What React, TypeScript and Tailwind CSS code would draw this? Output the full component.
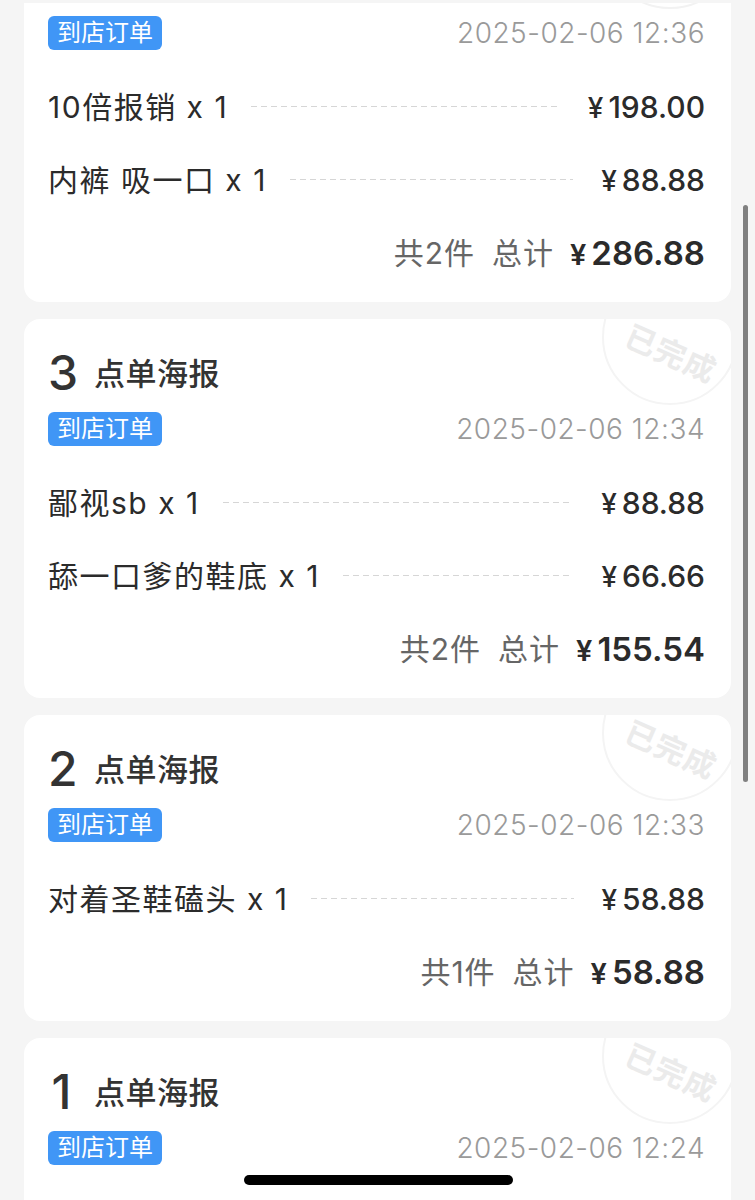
import React from "react";

type Item = { name: string; price: string };
type Order = {
  no?: string;
  date: string;
  items: Item[];
  count: number;
  total: string;
};

const orders: Order[] = [
  {
    no: "4",
    date: "2025-02-06 12:36",
    items: [
      { name: "10倍报销 x 1", price: "198.00" },
      { name: "内裤 吸一口 x 1", price: "88.88" },
    ],
    count: 2,
    total: "286.88",
  },
  {
    no: "3",
    date: "2025-02-06 12:34",
    items: [
      { name: "鄙视sb x 1", price: "88.88" },
      { name: "舔一口爹的鞋底 x 1", price: "66.66" },
    ],
    count: 2,
    total: "155.54",
  },
  {
    no: "2",
    date: "2025-02-06 12:33",
    items: [{ name: "对着圣鞋磕头 x 1", price: "58.88" }],
    count: 1,
    total: "58.88",
  },
  {
    no: "1",
    date: "2025-02-06 12:24",
    items: [],
    count: 0,
    total: "",
  },
];

function Stamp() {
  return (
    <>
      <div className="pointer-events-none absolute -top-[50px] -right-[7px] h-[136px] w-[136px] rounded-full border-[2px] border-[#f4f4f4]" />
      <span className="pointer-events-none absolute right-[12px] top-[19px] rotate-[24deg] text-[31px] font-bold leading-none tracking-[1px] text-[#ebebeb]">
        已完成
      </span>
    </>
  );
}

function Card({ o, cropped }: { o: Order; cropped?: boolean }) {
  return (
    <div
      className={`relative overflow-hidden bg-white pl-[24px] pr-[26px] ${
        cropped ? "rounded-b-[16px] pt-[13px] pb-[12px]" : "rounded-[16px] pb-[12px]"
      }`}
    >
      {cropped ? (
        <div className="pointer-events-none absolute -top-[130px] -right-[7px] h-[136px] w-[136px] rounded-full border-[2px] border-[#f2f2f2]" />
      ) : (
        <Stamp />
      )}
      {!cropped && (
        <div className="relative mt-[24px] mb-[9px] flex h-[60px] items-center gap-[19px] text-[#333]">
          <span className="w-[27px] text-center text-[48px] font-medium leading-none">{o.no}</span>
          <span className="text-[31px] font-medium leading-none tracking-[0.5px]">点单海报</span>
        </div>
      )}
      <div className="relative flex h-[34px] items-center justify-between">
        <span className="flex h-[34px] items-center rounded-[6px] bg-[#4096f6] px-[9px] text-[24px] leading-none text-white">
          到店订单
        </span>
        <span className="text-[28px] font-light leading-none tracking-[0.5px] text-[#9a9a9a]">{o.date}</span>
      </div>
      {o.items.length > 0 && (
        <div className="relative mt-[20px]">
          {o.items.map((it) => (
            <div key={it.name} className="flex h-[73px] items-center">
              <span className="text-[30px] leading-none tracking-[1.5px] text-[#2b2b2b]">{it.name}</span>
              <div className="ml-[23px] mr-[28px] h-px flex-1 bg-[linear-gradient(to_right,#d6d6d6_60%,transparent_0)] bg-[length:10px_1px]" />
              <span className="flex items-baseline text-[#2b2b2b]">
                <span className="mr-[5px] text-[28px] font-medium leading-none">¥</span>
                <span className="text-[30px] font-medium leading-none">{it.price}</span>
              </span>
            </div>
          ))}
          <div className="flex h-[74px] items-center justify-end">
            <span className="text-[30px] leading-none tracking-[1px] text-[#666]">共{o.count}件</span>
            <span className="ml-[17px] text-[30px] leading-none tracking-[1px] text-[#666]">总计</span>
            <span className="ml-[16px] flex items-baseline text-[#2b2b2b]">
              <span className="mr-[5px] text-[29px] font-semibold leading-none">¥</span>
              <span className="text-[33px] font-semibold leading-none">{o.total}</span>
            </span>
          </div>
        </div>
      )}
      {o.items.length === 0 && <div className="h-[200px]" />}
    </div>
  );
}

export default function App() {
  return (
    <div className="relative h-[1200px] w-[755px] overflow-hidden bg-[#f5f5f5] font-['Inter','Noto_Sans_CJK_SC',sans-serif]">
      <div className="flex flex-col gap-[17px] px-[24px] pt-[3px]">
        {orders.map((o, i) => (
          <Card key={i} o={o} cropped={i === 0} />
        ))}
      </div>
      <div className="absolute right-[7px] top-[205px] h-[577px] w-[5px] rounded-full bg-[#808080]" />
      <div className="absolute left-[244px] top-[1175px] h-[10px] w-[269px] rounded-full bg-black" />
    </div>
  );
}
